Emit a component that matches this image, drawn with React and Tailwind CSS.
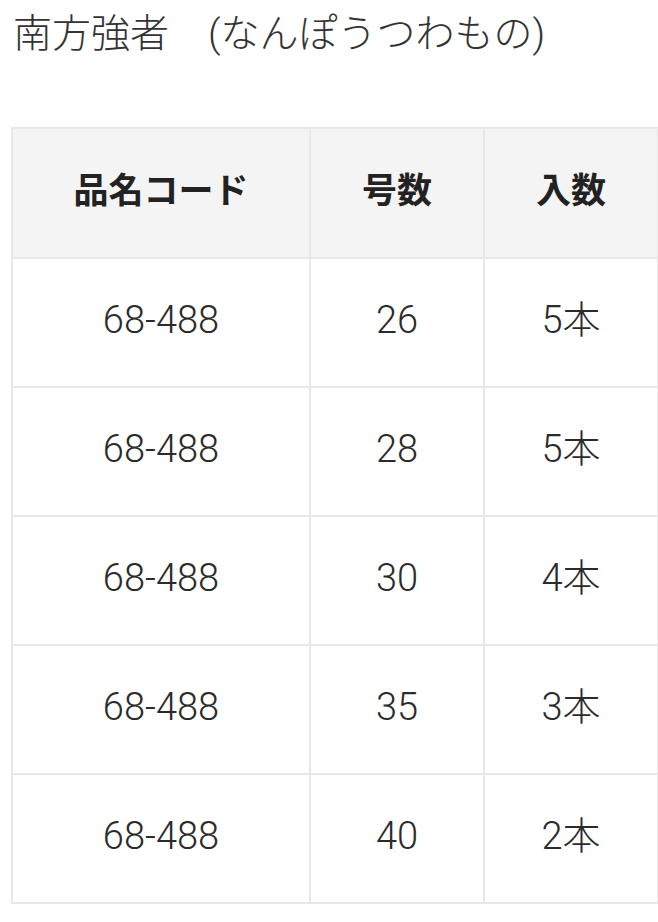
import React from "react";

const rows = [
  { code: "68-488", size: "26", qty: "5本" },
  { code: "68-488", size: "28", qty: "5本" },
  { code: "68-488", size: "30", qty: "4本" },
  { code: "68-488", size: "35", qty: "3本" },
  { code: "68-488", size: "40", qty: "2本" },
];

export default function App() {
  return (
    <div
      className="min-h-[922px] bg-white text-[#2b2b2b] pl-[11px]"
      style={{ fontFamily: 'Roboto, "Noto Sans CJK JP", sans-serif' }}
    >
      <h1 className="pt-[7px] pl-[2px] text-[39px] leading-[54px] font-light text-[#333]">
        南方強者　(なんぽうつわもの)
      </h1>

      <table className="mt-[66px] w-[646px] border-collapse table-fixed">
        <colgroup>
          <col className="w-[298px]" />
          <col className="w-[174px]" />
          <col className="w-[174px]" />
        </colgroup>
        <thead>
          <tr className="bg-[#f4f4f4] h-[130px]">
            <th className="border-2 border-[#e8e8e8] pb-[2px] text-[35px] font-bold text-[#222]">品名コード</th>
            <th className="border-2 border-[#e8e8e8] pb-[2px] text-[35px] font-bold text-[#222]">号数</th>
            <th className="border-2 border-[#e8e8e8] pb-[2px] text-[35px] font-bold text-[#222]">入数</th>
          </tr>
        </thead>
        <tbody>
          {rows.map((r, i) => (
            <tr key={i} className="h-[129px]">
              <td className="border-2 border-[#e8e8e8] pb-[5px] text-center text-[38px] font-light">{r.code}</td>
              <td className="border-2 border-[#e8e8e8] pb-[5px] text-center text-[38px] font-light">{r.size}</td>
              <td className="border-2 border-[#e8e8e8] pb-[5px] text-center text-[38px] font-light">{r.qty}</td>
            </tr>
          ))}
        </tbody>
      </table>
    </div>
  );
}
